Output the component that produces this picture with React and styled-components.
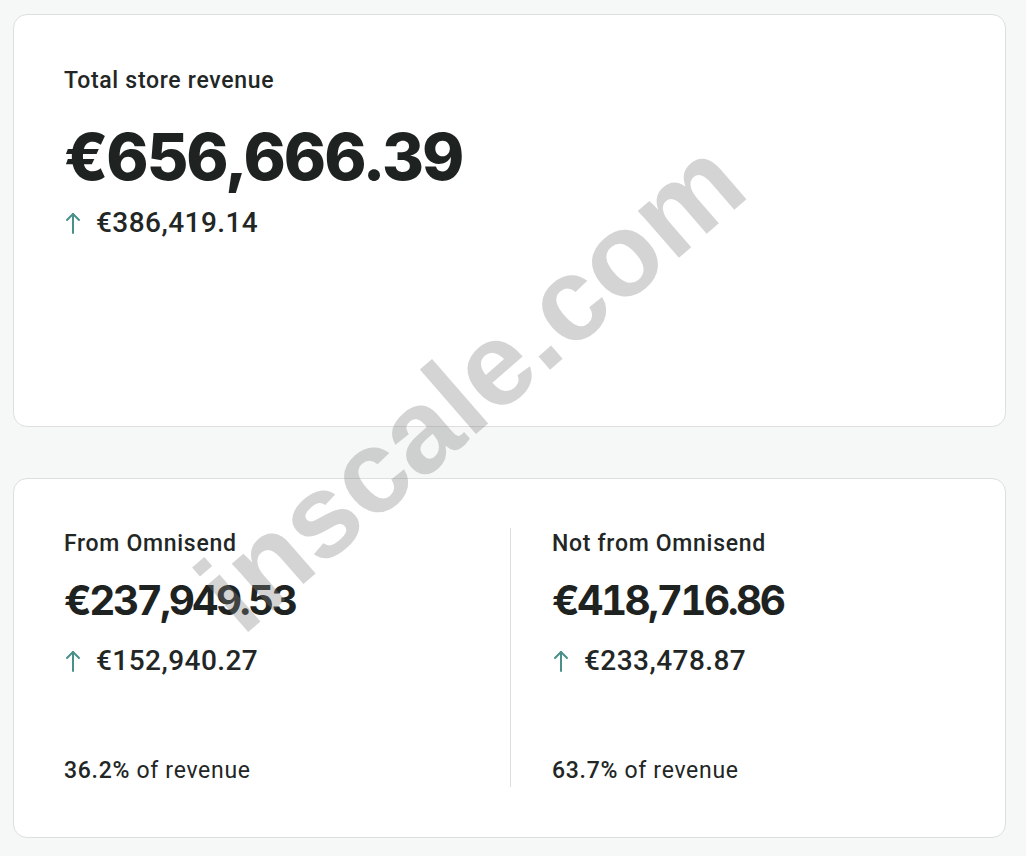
import React from 'react'
import styled, { createGlobalStyle } from 'styled-components'

const GlobalStyle = createGlobalStyle`
  html, body {
    margin: 0;
    padding: 0;
    background: #f6f7f7;
  }
  body {
    font-family: Roboto, "Liberation Sans", sans-serif;
    color: #222625;
  }
`

const Page = styled.div`
  position: relative;
  width: 1026px;
  height: 856px;
  box-sizing: border-box;
  padding: 14px 20px 0 13px;
  display: flex;
  flex-direction: column;
  gap: 51px;
  overflow: hidden;
`

const Card = styled.section`
  background: #fff;
  border: 1px solid #dcdfde;
  border-radius: 14px;
  box-sizing: border-box;
  height: ${p => p.$height}px;
`

const TotalCard = styled(Card)`
  padding: 50px 50px;
`

const SplitCard = styled(Card)`
  padding: 49px 0 50px;
  display: grid;
  grid-template-columns: 496px 1fr;
`

const Column = styled.div`
  display: flex;
  flex-direction: column;
  padding-left: ${p => p.$pad}px;
  border-left: ${p => (p.$divider ? '1px solid #dcdfde' : 'none')};
`

const Label = styled.div`
  font-size: 23px;
  line-height: 32px;
  font-weight: 500;
  letter-spacing: 0.7px;
  color: #222625;
`

const BigValue = styled.div`
  font-family: Inter, "Liberation Sans", sans-serif;
  font-weight: ${p => p.$weight};
  font-size: ${p => p.$size}px;
  line-height: ${p => p.$lh}px;
  letter-spacing: ${p => p.$ls}px;
  margin-top: ${p => p.$mt}px;
  font-variant-numeric: ${p => (p.$tabular ? 'tabular-nums' : 'normal')};
  color: #1e2321;
`

const Change = styled.div`
  display: flex;
  align-items: center;
  gap: 15px;
  font-size: 28px;
  line-height: 32px;
  font-weight: 500;
  letter-spacing: 0.45px;
  margin-top: ${p => p.$mt}px;
  color: #222625;
`

const Arrow = styled.svg`
  width: 16px;
  height: 22px;
  margin-left: 1px;
  flex: none;
  color: #4a908a;
`

const Share = styled.div`
  margin-top: auto;
  font-size: 23px;
  line-height: 32px;
  font-weight: 400;
  letter-spacing: 0.7px;
  color: #222625;
`

const Percent = styled.span`
  font-weight: 500;
`

const Watermark = styled.div`
  position: absolute;
  left: 470px;
  top: 385px;
  transform: translate(-50%, -50%) rotate(-41deg);
  font-family: "Liberation Sans", Arial, sans-serif;
  font-weight: 700;
  font-size: 118px;
  line-height: normal;
  color: rgba(128, 128, 128, 0.34);
  white-space: nowrap;
  pointer-events: none;
`

const UpArrow = () => (
  <Arrow viewBox="0 0 16 22" fill="none" stroke="currentColor" strokeWidth="2" strokeLinecap="round" strokeLinejoin="round">
    <path d="M8 21V2" />
    <path d="M2 8l6-6 6 6" />
  </Arrow>
)

const Metric = ({ label, value, change, percent, divider, pad }) => (
  <Column $divider={divider} $pad={pad}>
    <Label>{label}</Label>
    <BigValue $weight={700} $size={40.5} $lh={50} $ls={-2.5} $mt={16} $tabular>{value}</BigValue>
    <Change $mt={19}>
      <UpArrow />
      {change}
    </Change>
    <Share>
      <Percent>{percent}</Percent> of revenue
    </Share>
  </Column>
)

const App = () => (
  <>
    <GlobalStyle />
    <Page>
      <TotalCard $height={413}>
        <Label>Total store revenue</Label>
        <BigValue $weight={800} $size={64} $lh={77} $ls={-2} $mt={21}>€656,666.39</BigValue>
        <Change $mt={12}>
          <UpArrow />
          €386,419.14
        </Change>
      </TotalCard>
      <SplitCard $height={360}>
        <Metric
          label="From Omnisend"
          value="€237,949.53"
          change="€152,940.27"
          percent="36.2%"
          pad={50}
        />
        <Metric
          label="Not from Omnisend"
          value="€418,716.86"
          change="€233,478.87"
          percent="63.7%"
          pad={41}
          divider
        />
      </SplitCard>
      <Watermark>inscale.com</Watermark>
    </Page>
  </>
)

export default App
